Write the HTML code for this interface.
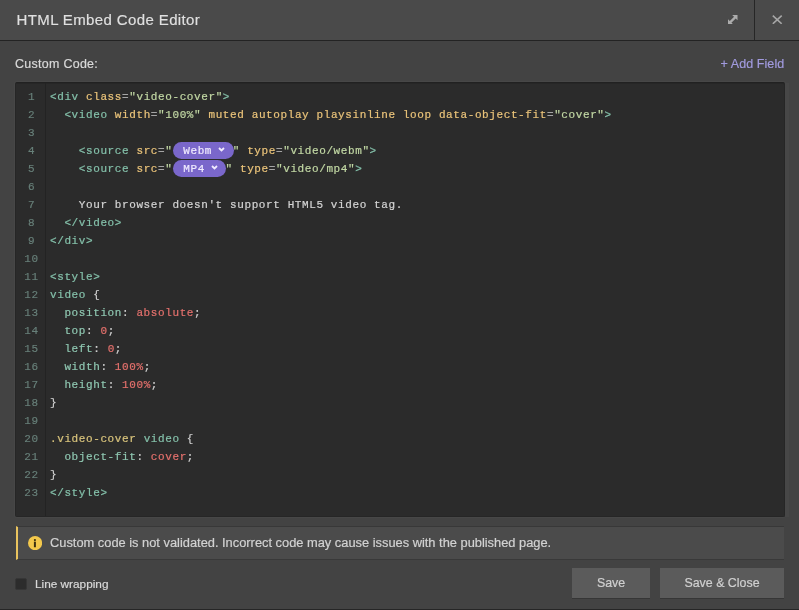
<!DOCTYPE html>
<html><head><meta charset="utf-8">
<style>
*{box-sizing:border-box;margin:0;padding:0}
html,body{width:799px;height:610px;overflow:hidden;will-change:transform;background:#434343;font-family:"Liberation Sans",sans-serif;}
.abs{position:absolute}
#hdr{left:0;top:0;width:799px;height:41px;background:#4a4a4a;border-bottom:1px solid #232323}
#title{left:16.5px;top:11px;font-size:15px;letter-spacing:0.38px;color:#e0e0e0;white-space:nowrap;line-height:18px;-webkit-text-stroke:0.15px #e0e0e0}
#div1{left:754px;top:0;width:1px;height:40px;background:#262626}
#lbl{left:15px;top:57px;font-size:12.45px;letter-spacing:0.3px;color:#d9d9d9;white-space:nowrap;line-height:14px;-webkit-text-stroke:0.2px #d9d9d9}
#add{left:720.5px;top:57px;font-size:12.5px;letter-spacing:0.08px;color:#a19ade;white-space:nowrap;line-height:14px;-webkit-text-stroke:0.2px #a19ade}
#ed{left:15px;top:82px;width:770px;height:435px;background:#2b2b2b;border:1px solid #262626;border-top-color:#212121;border-radius:2px;box-shadow:inset 0 1px 0 #262626, 0 0 0 1px rgba(255,255,255,0.025)}
#gut{left:16px;top:83px;width:30px;height:433px;background:#2b2b2b;border-right:1px solid #232323;box-shadow:inset 0 1px 0 #262626}
#code{left:50px;top:87.5px;font-family:"Liberation Mono",monospace;font-size:11px;letter-spacing:0.6px;-webkit-text-stroke-width:0.2px;line-height:18px;white-space:pre;color:#d4d4d4}
#nums{left:16px;top:87.5px;width:31px;white-space:pre;font-family:"Liberation Mono",monospace;font-size:11px;letter-spacing:0.6px;line-height:18px;text-align:center;color:#68807a;-webkit-text-stroke-width:0.15px}
.t{color:#84c0aa}.a{color:#ebc47a}.s{color:#c2d8a4}.e{color:#a6a6a6}.v{color:#e5716d}.q{color:#8fc7b1}.y{color:#d9c47c}.p{color:#d0d0d0}
.pill{display:inline-block;background:#7a67cb;color:#efeaff;border-radius:9px;height:17px;line-height:19px;vertical-align:top;position:relative;top:0.5px;margin-left:0.8px;padding:0 8.5px 0 10px;margin-right:-0.8px}
.pill svg{margin-left:6px;vertical-align:middle;position:relative;top:-2px}
#warn{left:15.5px;top:526px;width:768.5px;height:34px;background:#4b4b4b;border-left:2.5px solid #e9c35e;border-top:1px solid #383838;border-bottom:1px solid #393939}
#wtxt{left:50px;top:536px;font-size:12.85px;-webkit-text-stroke:0.2px #d2d2d2;color:#d2d2d2;white-space:nowrap;line-height:14px}
#chk{left:15px;top:578px;width:12px;height:11.5px;background:#2c2c2c;border-radius:2px;border:1px solid #363636}
#lw{left:35px;top:577px;font-size:11.8px;color:#d9d9d9;white-space:nowrap;line-height:14px;-webkit-text-stroke:0.2px #d9d9d9}
.btn{top:568px;height:31px;background:#5b5b5b;color:#d0d0d0;font-size:12.4px;text-align:center;line-height:31px;border-bottom:1px solid #363636;-webkit-text-stroke:0.2px #d0d0d0}
#b1{left:572px;width:78px}
#b2{left:660px;width:124px}
#bot{left:0;top:608.7px;width:799px;height:1.3px;background:#262626}
</style></head><body>
<div id="hdr" class="abs"></div>
<div id="title" class="abs">HTML Embed Code Editor</div>
<div id="div1" class="abs"></div>
<svg class="abs" style="left:728px;top:14.5px" width="9.5" height="9.5" viewBox="0 0 10 10"><path d="M10 0 L4.4 0 L10 5.6 Z M0 10 L0 4.4 L5.6 10 Z" fill="#acacac"/><path d="M2.2 7.8 L7.8 2.2" stroke="#acacac" stroke-width="2.4"/></svg>
<svg class="abs" style="left:772px;top:14.5px" width="10.5" height="9.5" viewBox="0 0 10.5 9.5"><path d="M0.8 0.7 L9.7 8.8 M9.7 0.7 L0.8 8.8" stroke="#a6a6a6" stroke-width="1.6" fill="none"/></svg>
<div id="lbl" class="abs">Custom Code:</div>
<div id="add" class="abs">+ Add Field</div>
<div id="ed" class="abs"></div>
<div id="gut" class="abs"></div>
<div class="abs" style="left:785px;top:83px;width:4px;height:434px;background:#474747"></div>
<div id="nums" class="abs">1
2
3
4
5
6
7
8
9
10
11
12
13
14
15
16
17
18
19
20
21
22
23</div>
<div id="code" class="abs"><span class="t">&lt;div</span> <span class="a">class</span><span class="e">=</span><span class="s">"video-cover"</span><span class="t">&gt;</span>
  <span class="t">&lt;video</span> <span class="a">width</span><span class="e">=</span><span class="s">"100%"</span> <span class="a">muted autoplay playsinline loop data-object-fit</span><span class="e">=</span><span class="s">"cover"</span><span class="t">&gt;</span>

    <span class="t">&lt;source</span> <span class="a">src</span><span class="e">=</span><span class="s">"</span><span class="pill">Webm<svg width="7" height="5" viewBox="0 0 7 5"><path d="M1 1 L3.5 3.5 L6 1" stroke="#efeaff" stroke-width="1.8" fill="none"/></svg></span><span class="s">"</span> <span class="a">type</span><span class="e">=</span><span class="s">"video/webm"</span><span class="t">&gt;</span>
    <span class="t">&lt;source</span> <span class="a">src</span><span class="e">=</span><span class="s">"</span><span class="pill">MP4<svg width="7" height="5" viewBox="0 0 7 5"><path d="M1 1 L3.5 3.5 L6 1" stroke="#efeaff" stroke-width="1.8" fill="none"/></svg></span><span class="s">"</span> <span class="a">type</span><span class="e">=</span><span class="s">"video/mp4"</span><span class="t">&gt;</span>

    Your browser doesn't support HTML5 video tag.
  <span class="t">&lt;/video&gt;</span>
<span class="t">&lt;/div&gt;</span>

<span class="t">&lt;style&gt;</span>
<span class="t">video</span> <span class="p">{</span>
  <span class="q">position</span><span class="p">:</span> <span class="v">absolute</span><span class="p">;</span>
  <span class="q">top</span><span class="p">:</span> <span class="v">0</span><span class="p">;</span>
  <span class="q">left</span><span class="p">:</span> <span class="v">0</span><span class="p">;</span>
  <span class="q">width</span><span class="p">:</span> <span class="v">100%</span><span class="p">;</span>
  <span class="q">height</span><span class="p">:</span> <span class="v">100%</span><span class="p">;</span>
<span class="p">}</span>

<span class="y">.video-cover</span> <span class="t">video</span> <span class="p">{</span>
  <span class="q">object-fit</span><span class="p">:</span> <span class="v">cover</span><span class="p">;</span>
<span class="p">}</span>
<span class="t">&lt;/style&gt;</span></div>
<div id="warn" class="abs"></div>
<svg class="abs" style="left:27.9px;top:535.7px" width="14.2" height="14.2" viewBox="0 0 15 15"><circle cx="7.5" cy="7.5" r="7.5" fill="#f3c84c"/><circle cx="7.3" cy="4.3" r="1.15" fill="#3b2f10"/><rect x="6.25" y="6" width="2.1" height="5.9" fill="#3b2f10"/></svg>
<div id="wtxt" class="abs">Custom code is not validated. Incorrect code may cause issues with the published page.</div>
<div id="chk" class="abs"></div>
<div id="lw" class="abs">Line wrapping</div>
<div id="b1" class="abs btn">Save</div>
<div id="b2" class="abs btn">Save &amp; Close</div>
<div id="bot" class="abs"></div>
</body></html>
